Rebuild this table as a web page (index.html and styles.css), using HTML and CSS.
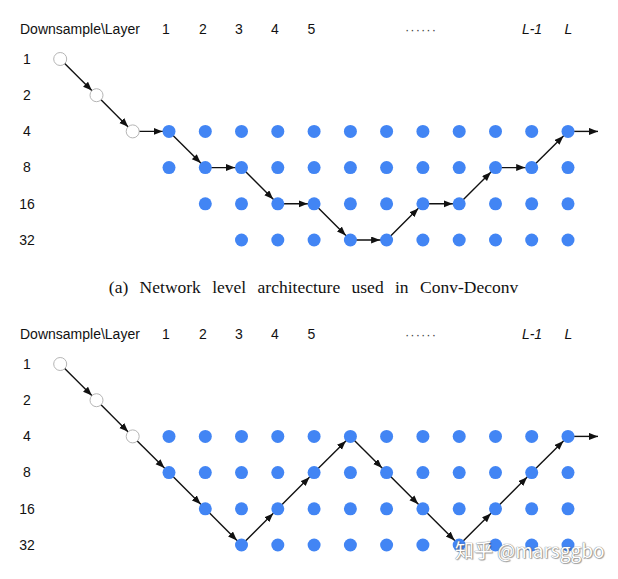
FILE: index.html
```html
<!DOCTYPE html>
<html lang="en">
<head>
<meta charset="utf-8">
<title>Network level architecture</title>
<link rel="stylesheet" href="styles.css">
</head>
<body>
<main class="page">
  <svg class="fig fig-a" width="618" height="270" viewBox="0 0 618 270" xmlns="http://www.w3.org/2000/svg">
    <defs>
      <marker id="ah" markerUnits="userSpaceOnUse" markerWidth="10" markerHeight="8" refX="15.5" refY="3.5" orient="auto">
        <path d="M0,0 L9,3.5 L0,7 Z" class="head"/>
      </marker>
      <marker id="ahEnd" markerUnits="userSpaceOnUse" markerWidth="10" markerHeight="8" refX="9" refY="3.5" orient="auto">
        <path d="M0,0 L9,3.5 L0,7 Z" class="head"/>
      </marker>
    </defs>
    <g class="labels">
      <text x="20" y="34" class="lbl">Downsample\Layer</text>
      <text x="166" y="34" class="lbl mid">1</text>
      <text x="203" y="34" class="lbl mid">2</text>
      <text x="239" y="34" class="lbl mid">3</text>
      <text x="275" y="34" class="lbl mid">4</text>
      <text x="311.5" y="34" class="lbl mid">5</text>
      <text x="421" y="34" class="lbl mid dots">······</text>
      <text x="532" y="34" class="lbl mid it">L-1</text>
      <text x="568.5" y="34" class="lbl mid it">L</text>
      <text x="27" y="64" class="lbl mid">1</text>
      <text x="27" y="100" class="lbl mid">2</text>
      <text x="27" y="136" class="lbl mid">4</text>
      <text x="27" y="172" class="lbl mid">8</text>
      <text x="27" y="209" class="lbl mid">16</text>
      <text x="27" y="245" class="lbl mid">32</text>
    </g>
    <g class="edges">
      <line x1="60.2" y1="59" x2="96.5" y2="95.2" marker-end="url(#ah)"/>
      <line x1="96.5" y1="95.2" x2="132.7" y2="131.4" marker-end="url(#ah)"/>
      <line x1="132.7" y1="131.4" x2="169" y2="131.4" marker-end="url(#ah)"/>
      <line x1="169" y1="131.4" x2="205.3" y2="167.6" marker-end="url(#ah)"/>
      <line x1="205.3" y1="167.6" x2="241.5" y2="167.6" marker-end="url(#ah)"/>
      <line x1="241.5" y1="167.6" x2="277.8" y2="203.8" marker-end="url(#ah)"/>
      <line x1="277.8" y1="203.8" x2="314.1" y2="203.8" marker-end="url(#ah)"/>
      <line x1="314.1" y1="203.8" x2="350.4" y2="240" marker-end="url(#ah)"/>
      <line x1="350.4" y1="240" x2="386.6" y2="240" marker-end="url(#ah)"/>
      <line x1="386.6" y1="240" x2="422.9" y2="203.8" marker-end="url(#ah)"/>
      <line x1="422.9" y1="203.8" x2="459.2" y2="203.8" marker-end="url(#ah)"/>
      <line x1="459.2" y1="203.8" x2="495.5" y2="167.6" marker-end="url(#ah)"/>
      <line x1="495.5" y1="167.6" x2="531.7" y2="167.6" marker-end="url(#ah)"/>
      <line x1="531.7" y1="167.6" x2="568" y2="131.4" marker-end="url(#ah)"/>
      <line x1="568" y1="131.4" x2="598" y2="131.4" marker-end="url(#ahEnd)"/>
    </g>
    <g class="holes">
      <circle cx="60.2" cy="59" r="6.5"/>
      <circle cx="96.5" cy="95.2" r="6.5"/>
      <circle cx="132.7" cy="131.4" r="6.5"/>
    </g>
    <g class="nodes">
      <circle cx="169" cy="131.4" r="6.5"/><circle cx="205.3" cy="131.4" r="6.5"/><circle cx="241.5" cy="131.4" r="6.5"/><circle cx="277.8" cy="131.4" r="6.5"/><circle cx="314.1" cy="131.4" r="6.5"/><circle cx="350.4" cy="131.4" r="6.5"/><circle cx="386.6" cy="131.4" r="6.5"/><circle cx="422.9" cy="131.4" r="6.5"/><circle cx="459.2" cy="131.4" r="6.5"/><circle cx="495.5" cy="131.4" r="6.5"/><circle cx="531.7" cy="131.4" r="6.5"/><circle cx="568" cy="131.4" r="6.5"/>
      <circle cx="169" cy="167.6" r="6.5"/><circle cx="205.3" cy="167.6" r="6.5"/><circle cx="241.5" cy="167.6" r="6.5"/><circle cx="277.8" cy="167.6" r="6.5"/><circle cx="314.1" cy="167.6" r="6.5"/><circle cx="350.4" cy="167.6" r="6.5"/><circle cx="386.6" cy="167.6" r="6.5"/><circle cx="422.9" cy="167.6" r="6.5"/><circle cx="459.2" cy="167.6" r="6.5"/><circle cx="495.5" cy="167.6" r="6.5"/><circle cx="531.7" cy="167.6" r="6.5"/><circle cx="568" cy="167.6" r="6.5"/>
      <circle cx="205.3" cy="203.8" r="6.5"/><circle cx="241.5" cy="203.8" r="6.5"/><circle cx="277.8" cy="203.8" r="6.5"/><circle cx="314.1" cy="203.8" r="6.5"/><circle cx="350.4" cy="203.8" r="6.5"/><circle cx="386.6" cy="203.8" r="6.5"/><circle cx="422.9" cy="203.8" r="6.5"/><circle cx="459.2" cy="203.8" r="6.5"/><circle cx="495.5" cy="203.8" r="6.5"/><circle cx="531.7" cy="203.8" r="6.5"/><circle cx="568" cy="203.8" r="6.5"/>
      <circle cx="241.5" cy="240" r="6.5"/><circle cx="277.8" cy="240" r="6.5"/><circle cx="314.1" cy="240" r="6.5"/><circle cx="350.4" cy="240" r="6.5"/><circle cx="386.6" cy="240" r="6.5"/><circle cx="422.9" cy="240" r="6.5"/><circle cx="459.2" cy="240" r="6.5"/><circle cx="495.5" cy="240" r="6.5"/><circle cx="531.7" cy="240" r="6.5"/><circle cx="568" cy="240" r="6.5"/>
    </g>
  </svg>

  <p class="caption">(a) Network level architecture used in Conv-Deconv</p>

  <svg class="fig fig-b" width="618" height="274" viewBox="0 0 618 274" xmlns="http://www.w3.org/2000/svg">
    <g class="labels">
      <text x="20" y="34" class="lbl">Downsample\Layer</text>
      <text x="166" y="34" class="lbl mid">1</text>
      <text x="203" y="34" class="lbl mid">2</text>
      <text x="239" y="34" class="lbl mid">3</text>
      <text x="275" y="34" class="lbl mid">4</text>
      <text x="311.5" y="34" class="lbl mid">5</text>
      <text x="421" y="34" class="lbl mid dots">······</text>
      <text x="532" y="34" class="lbl mid it">L-1</text>
      <text x="568.5" y="34" class="lbl mid it">L</text>
      <text x="27" y="64" class="lbl mid">1</text>
      <text x="27" y="100" class="lbl mid">2</text>
      <text x="27" y="136" class="lbl mid">4</text>
      <text x="27" y="172" class="lbl mid">8</text>
      <text x="27" y="209" class="lbl mid">16</text>
      <text x="27" y="245" class="lbl mid">32</text>
    </g>
    <g class="edges">
      <line x1="60.2" y1="59" x2="96.5" y2="95.2" marker-end="url(#ah)"/>
      <line x1="96.5" y1="95.2" x2="132.7" y2="131.4" marker-end="url(#ah)"/>
      <line x1="132.7" y1="131.4" x2="169" y2="167.6" marker-end="url(#ah)"/>
      <line x1="169" y1="167.6" x2="205.3" y2="203.8" marker-end="url(#ah)"/>
      <line x1="205.3" y1="203.8" x2="241.5" y2="240" marker-end="url(#ah)"/>
      <line x1="241.5" y1="240" x2="277.8" y2="203.8" marker-end="url(#ah)"/>
      <line x1="277.8" y1="203.8" x2="314.1" y2="167.6" marker-end="url(#ah)"/>
      <line x1="314.1" y1="167.6" x2="350.4" y2="131.4" marker-end="url(#ah)"/>
      <line x1="350.4" y1="131.4" x2="386.6" y2="167.6" marker-end="url(#ah)"/>
      <line x1="386.6" y1="167.6" x2="422.9" y2="203.8" marker-end="url(#ah)"/>
      <line x1="422.9" y1="203.8" x2="459.2" y2="240" marker-end="url(#ah)"/>
      <line x1="459.2" y1="240" x2="495.5" y2="203.8" marker-end="url(#ah)"/>
      <line x1="495.5" y1="203.8" x2="531.7" y2="167.6" marker-end="url(#ah)"/>
      <line x1="531.7" y1="167.6" x2="568" y2="131.4" marker-end="url(#ah)"/>
      <line x1="568" y1="131.4" x2="598" y2="131.4" marker-end="url(#ahEnd)"/>
    </g>
    <g class="holes">
      <circle cx="60.2" cy="59" r="6.5"/>
      <circle cx="96.5" cy="95.2" r="6.5"/>
      <circle cx="132.7" cy="131.4" r="6.5"/>
    </g>
    <g class="nodes">
      <circle cx="169" cy="131.4" r="6.5"/><circle cx="205.3" cy="131.4" r="6.5"/><circle cx="241.5" cy="131.4" r="6.5"/><circle cx="277.8" cy="131.4" r="6.5"/><circle cx="314.1" cy="131.4" r="6.5"/><circle cx="350.4" cy="131.4" r="6.5"/><circle cx="386.6" cy="131.4" r="6.5"/><circle cx="422.9" cy="131.4" r="6.5"/><circle cx="459.2" cy="131.4" r="6.5"/><circle cx="495.5" cy="131.4" r="6.5"/><circle cx="531.7" cy="131.4" r="6.5"/><circle cx="568" cy="131.4" r="6.5"/>
      <circle cx="169" cy="167.6" r="6.5"/><circle cx="205.3" cy="167.6" r="6.5"/><circle cx="241.5" cy="167.6" r="6.5"/><circle cx="277.8" cy="167.6" r="6.5"/><circle cx="314.1" cy="167.6" r="6.5"/><circle cx="350.4" cy="167.6" r="6.5"/><circle cx="386.6" cy="167.6" r="6.5"/><circle cx="422.9" cy="167.6" r="6.5"/><circle cx="459.2" cy="167.6" r="6.5"/><circle cx="495.5" cy="167.6" r="6.5"/><circle cx="531.7" cy="167.6" r="6.5"/><circle cx="568" cy="167.6" r="6.5"/>
      <circle cx="205.3" cy="203.8" r="6.5"/><circle cx="241.5" cy="203.8" r="6.5"/><circle cx="277.8" cy="203.8" r="6.5"/><circle cx="314.1" cy="203.8" r="6.5"/><circle cx="350.4" cy="203.8" r="6.5"/><circle cx="386.6" cy="203.8" r="6.5"/><circle cx="422.9" cy="203.8" r="6.5"/><circle cx="459.2" cy="203.8" r="6.5"/><circle cx="495.5" cy="203.8" r="6.5"/><circle cx="531.7" cy="203.8" r="6.5"/><circle cx="568" cy="203.8" r="6.5"/>
      <circle cx="241.5" cy="240" r="6.5"/><circle cx="277.8" cy="240" r="6.5"/><circle cx="314.1" cy="240" r="6.5"/><circle cx="350.4" cy="240" r="6.5"/><circle cx="386.6" cy="240" r="6.5"/><circle cx="422.9" cy="240" r="6.5"/><circle cx="459.2" cy="240" r="6.5"/><circle cx="495.5" cy="240" r="6.5"/><circle cx="531.7" cy="240" r="6.5"/><circle cx="568" cy="240" r="6.5"/>
    </g>
  </svg>

  <div class="watermark">知乎 @marsggbo</div>
</main>
</body>
</html>
```

FILE: styles.css
```css
html, body {
  margin: 0;
  padding: 0;
  background: #ffffff;
}

.page {
  position: relative;
  width: 618px;
  height: 579px;
  overflow: hidden;
  display: flex;
  flex-direction: column;
}

.fig {
  display: block;
  flex: none;
}

.lbl {
  font-family: "Liberation Sans", Arial, Helvetica, sans-serif;
  font-size: 14px;
  fill: #111111;
}

.mid {
  text-anchor: middle;
}

.it {
  font-style: italic;
}

.dots {
  font-size: 13px;
  letter-spacing: 1px;
  fill: #444;
}

.edges line {
  stroke: #111111;
  stroke-width: 1.4;
}

.head {
  fill: #111111;
}

.holes circle {
  fill: #ffffff;
  stroke: #b5b5b5;
  stroke-width: 1;
}

.nodes circle {
  fill: #4285f4;
}

.caption {
  margin: 0;
  flex: none;
  height: 35px;
  line-height: 35px;
  padding-left: 9px;
  text-align: center;
  font-family: "Liberation Serif", "Times New Roman", serif;
  font-size: 17.5px;
  word-spacing: 7px;
  color: #111111;
}

.watermark {
  position: absolute;
  left: 455px;
  top: 540px;
  font-family: "Noto Sans CJK SC", "Noto Sans", sans-serif;
  font-size: 19px;
  line-height: 19px;
  color: #ffffff;
  white-space: nowrap;
  text-shadow: 0 0 1px #7a7a7a, 0 0 1px #7a7a7a, 1px 1px 1px rgba(0,0,0,0.35);
}
```
